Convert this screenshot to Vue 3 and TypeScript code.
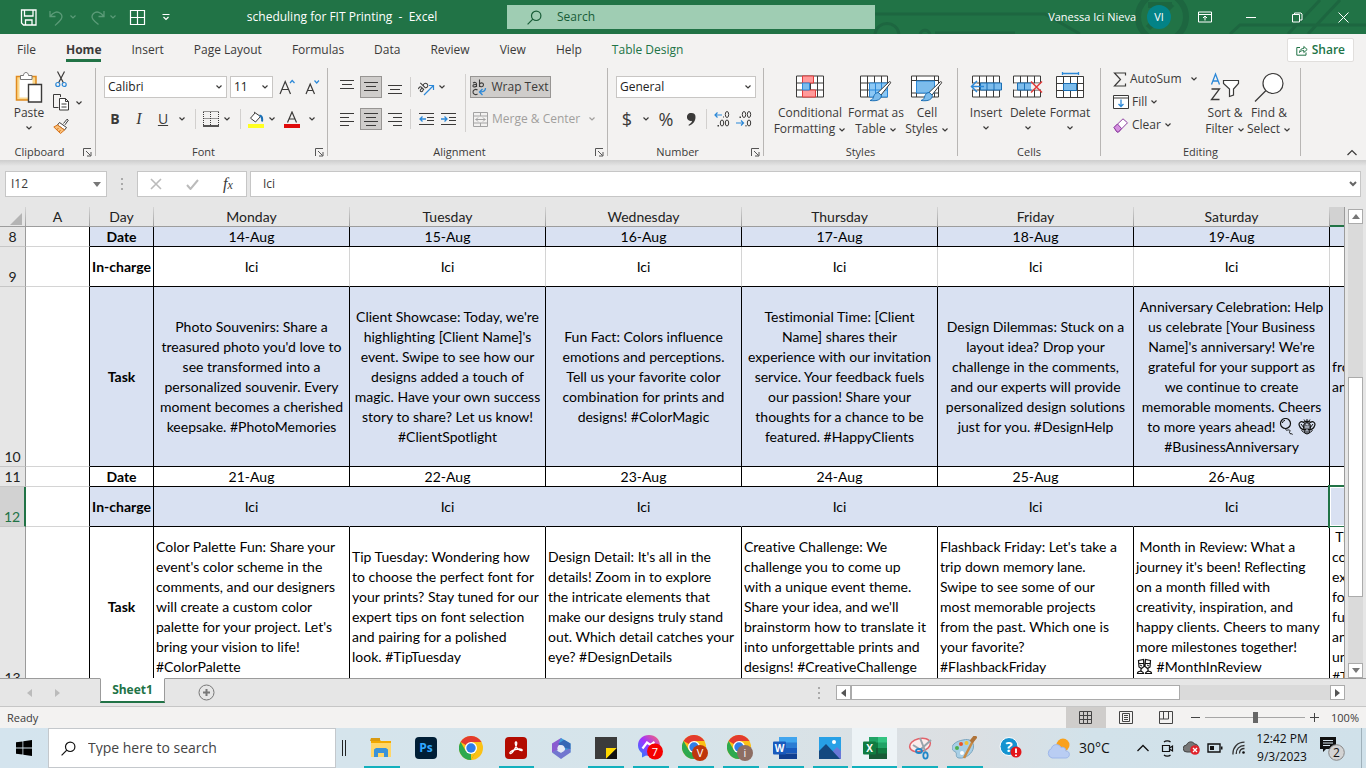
<script setup lang="ts">
import { h, ref } from 'vue'

interface IconDef {
  w: number
  h: number
  body: string
}

const sheetGrid = (w: number) =>
  `<path d="M.5 3.500h${w}v21h-${w}z" fill="#fff" stroke="#3b3a39"/><path d="M.5 10.500h${w}M.5 17.500h${w}M7.500 3.500v21M14.500 3.500v21M21.500 3.500v21" stroke="#3b3a39" fill="none"/>`

const brush =
  '<path d="M29 9.500c1-1 2 0 1.500 1L21 22.500l-3-2.500z" fill="#fff" stroke="#3b3a39"/><path d="M18.200 20l3 2.600c.5 4-3.500 6.500-11.200 5.400 3-.8 3-2.200 4-4.900.8-2 2.500-3 4.200-3.100z" fill="#7cbcec" stroke="#1a6fb5"/>'

const chromeBody =
  '<circle cx="12" cy="12" r="12" fill="#fbc116"/><path d="M12 12L1.600 6A12 12 0 0 1 22.400 6z" fill="#e33b2e"/><path d="M1.600 6A12 12 0 0 0 12 24l5.200-9-5.200 2-5.200-2z" fill="#2da94f"/><path d="M12 24l5.300-9L22.400 6H12z" fill="#fbc116"/><circle cx="12" cy="12" r="6" fill="#fff"/><circle cx="12" cy="12" r="4.700" fill="#2f7de9"/>'

const icons: Record<string, IconDef> = {
  save: { w: 17, h: 17, body: '<path d="M1.500 1h14.500v15H3.500l-2-2z M4.500 1v6h8.500V1M5.500 16v-5h6.500v5" fill="none" stroke="#fff" stroke-width="1.300"/>' },
  undo: { w: 16, h: 17, body: '<path d="M1 2v5.500h5.500M1.500 7C4 3.500 8 1.500 11.500 4.500c4 4-1 8-5.500 12" fill="none" stroke="#5b9b78" stroke-width="1.300"/>' },
  redo: { w: 16, h: 17, body: '<path d="M15 2v5.500H9.500M14.500 7C12 3.500 8 1.500 4.500 4.500c-4 4 1 8 5 11" fill="none" stroke="#5b9b78" stroke-width="1.300"/>' },
  qgrid: { w: 17, h: 17, body: '<path d="M1.500 1.500h14v14h-14zM8.500 1.500v14M1.500 8.500h14" fill="none" stroke="#fff" stroke-width="1.200"/>' },
  qmore: { w: 8, h: 8, body: '<path d="M.5 1.500h7M1.500 4l2.500 2.500L6.500 4" fill="none" stroke="#fff" stroke-width="1.200"/>' },
  chev: { w: 8, h: 6, body: '<path d="M1.500 1.500L4 4l2.500-2.500" fill="none" stroke="currentColor" stroke-width="1.200"/>' },
  lens: { w: 15, h: 15, body: '<circle cx="9.200" cy="5.800" r="4.700" fill="none" stroke="currentColor" stroke-width="1.200"/><path d="M5.800 9.200L.6 14.400" stroke="currentColor" stroke-width="1.200"/>' },
  ribbonOpt: { w: 14, h: 12, body: '<path d="M.5 1h13v10H.5zM.5 3.500h13M7 9.500V5.500M5 7l2-2 2 2" fill="none" stroke="#fff"/>' },
  min: { w: 11, h: 11, body: '<path d="M0 5.500h10" stroke="#fff"/>' },
  restore: { w: 11, h: 11, body: '<path d="M.5 2.500h7v7.500h-7zM2.500 2.500V1h6.500l1 1v6H8" fill="none" stroke="#fff"/>' },
  close: { w: 11, h: 11, body: '<path d="M.5.5l10 10M10.500.5l-10 10" stroke="#fff"/>' },
  share: { w: 12, h: 12, body: '<path d="M4 3.500H.8v7.700h9.200V8.500M3.500 8.500c.3-3 2-4 4.300-4V2.500l3.400 3-3.400 3v-2C6 6.500 4.500 7 3.500 8.500z" fill="none" stroke="#217346"/>' },
  paste: { w: 28, h: 31, body: '<path d="M1.500 4.500h19.500v23.500H1.500z" fill="#fbd98f" stroke="#e08a1e" stroke-width="1.500"/><path d="M4.500 7.500h13v18h-13z" fill="#fff"/><path d="M5.500 7.500v-4h3c0-4 5-4 5 0h3.500v4z" fill="#fff" stroke="#777"/><path d="M13.500 12.500h13v17.500h-13z" fill="#fff" stroke="#3b3a39" stroke-width="1.400"/>' },
  cut: { w: 12, h: 17, body: '<path d="M2.500.5L8.500 12M9.500.5L3.500 12" stroke="#3b3a39" stroke-width="1.200"/><circle cx="2.800" cy="13.500" r="2" fill="none" stroke="#2b88d8" stroke-width="1.200"/><circle cx="9.200" cy="13.500" r="2" fill="none" stroke="#2b88d8" stroke-width="1.200"/>' },
  copy: { w: 17, h: 17, body: '<path d="M5.500 13.500h-5v-13h7v2.500" fill="none" stroke="#3b3a39"/><path d="M6.500 4.500h6l3 3v8.500h-9z" fill="#fff" stroke="#3b3a39"/><path d="M12.500 4.500v3h3M8.500 10h5M8.500 13h5" fill="none" stroke="#3b3a39"/>' },
  painter: { w: 16, h: 16, body: '<path d="M10.500 5.500L14 1.200l1.300 1L12 6.800" fill="#fff" stroke="#3b3a39"/><path d="M6.500 4.500l7 5-2 2.500-7-5z" fill="#fff" stroke="#3b3a39"/><path d="M4.500 7l7 5-4 3.500L.8 9z" fill="#f9c07a" stroke="#d8731a"/><path d="M3.500 12l2-2M6 14l1.500-2" stroke="#d8731a"/>' },
  launch: { w: 9, h: 9, body: '<path d="M.5 8V.5H8M3 3l4.500 4.500M8 4v4H4" fill="none" stroke="#555"/>' },
  growFont: { w: 16, h: 16, body: '<path d="M1 15L6.200 2.500 11.500 15M2.800 10.500h6.800" fill="none" stroke="#3b3a39" stroke-width="1.200"/><path d="M11 4l2.200-2.500L15.500 4" fill="none" stroke="#2b88d8" stroke-width="1.200"/>' },
  shrinkFont: { w: 16, h: 16, body: '<path d="M2 15L6.200 5l4.300 10M3.500 11.500h5.500" fill="none" stroke="#3b3a39" stroke-width="1.200"/><path d="M10.500 1.500l2.200 2.500L15 1.500" fill="none" stroke="#2b88d8" stroke-width="1.200"/>' },
  borders: { w: 16, h: 16, body: '<path d="M.5.500h15M.5 7.500h15M.5 1v14M7.500 1v14M15.500 1v14" stroke="#3b3a39" stroke-dasharray="1 1" fill="none"/><path d="M0 15h16" stroke="#111" stroke-width="1.400"/>' },
  fill: { w: 16, h: 17, body: '<path d="M7 2L2.500 7.200 7.500 11l5-5.500L6 1" fill="#fff" stroke="#3b3a39"/><path d="M11.500 4.500c2.500.5 3 3 2.500 6" fill="none" stroke="#1a6fb5" stroke-width="2"/><path d="M0 13h16v4H0z" fill="#ffff21"/>' },
  fontColor: { w: 16, h: 17, body: '<path d="M3.500 11.500L8 1l4.500 10.500M5 8h6" fill="none" stroke="#3b3a39" stroke-width="1.200"/><path d="M0 13h16v4H0z" fill="#e00b0b"/>' },
  alTop: { w: 14, h: 16, body: '<path d="M0 3.500h14M2 7.500h10M0 11.500h14" stroke="#3b3a39" transform="translate(0,-2)"/>' },
  alMid: { w: 14, h: 16, body: '<path d="M0 3.500h14M2 7.500h10M0 11.500h14" stroke="#3b3a39"/>' },
  alBot: { w: 14, h: 16, body: '<path d="M0 3.500h14M2 7.500h10M0 11.500h14" stroke="#3b3a39" transform="translate(0,3)"/>' },
  alLeft: { w: 14, h: 16, body: '<path d="M0 2.500h14M0 6.500h9M0 10.500h14M0 14.500h9" stroke="#3b3a39"/>' },
  alCenter: { w: 14, h: 16, body: '<path d="M0 2.500h14M2 6.500h10M0 10.500h14M2 14.500h10" stroke="#3b3a39"/>' },
  alRight: { w: 14, h: 16, body: '<path d="M0 2.500h14M5 6.500h9M0 10.500h14M5 14.500h9" stroke="#3b3a39"/>' },
  orient: { w: 17, h: 17, body: '<g transform="rotate(-45 5 9)" fill="none" stroke="#3b3a39"><path d="M1 6.500c2-1.200 3.500-.5 3.500 1V11M4.500 8.500C2 8 .5 8.800 1 10c.6 1.400 3 1 3.500-.5M6.700 3.500V11M6.700 8c1-2 4-1.500 4 1s-3 3-4 1"/></g><path d="M6 16L15.500 6.500M11 6.500h4.500V11" fill="none" stroke="#2b88d8" stroke-width="1.200"/>' },
  outdent: { w: 15, h: 14, body: '<path d="M0 1.500h15M8 5.500h7M8 8.500h7M0 12.500h15" stroke="#3b3a39"/><path d="M7 7H1M3.500 4.500L1 7l2.500 2.500" fill="none" stroke="#2b88d8" stroke-width="1.300"/>' },
  indent: { w: 15, h: 14, body: '<path d="M0 1.500h15M8 5.500h7M8 8.500h7M0 12.500h15" stroke="#3b3a39"/><path d="M0 7h6M3.500 4.500L6 7 3.500 9.500" fill="none" stroke="#2b88d8" stroke-width="1.300"/>' },
  wrap: { w: 15, h: 17, body: '<g fill="none" stroke="#3b3a39" stroke-width="1.100"><path d="M1 4c1.500-1 3.500-.8 3.500 1v3M4.500 5.500C2 5.300.7 6 1 7.200c.5 1.200 3 .8 3.500-.5M7.500.5V8M7.500 5.500c.5-2.200 4-2.200 4 .2s-3.500 2.800-4 .6M5.500 11c-2-1.300-4.500-.3-4.500 2s2.500 3.300 4.500 2"/></g><path d="M13.500 9c0 3-1.500 4-5.500 4M10.500 10L7.500 13l3 3" fill="none" stroke="#2b88d8" stroke-width="1.300"/>' },
  merge: { w: 15, h: 15, body: '<path d="M.5.5h14v14H.5zM.5 4h14M.5 11h14M7.500.5V4M7.500 11v3.500M2.500 7.500h10M5 5.500l-2 2 2 2M10 5.500l2 2-2 2" fill="none" stroke="#a3a3a3"/>' },
  comma: { w: 9, h: 13, body: '<path d="M4.500 0a4 4 0 0 1 4 4c0 4-2 7-6.500 8.800l-.6-.8C4 10.500 5 9 5 7.800A4 4 0 1 1 4.500 0z" fill="#3b3a39"/>' },
  decInc: { w: 16, h: 16, body: '<g fill="none" stroke="#3b3a39"><ellipse cx="13" cy="3.500" rx="1.700" ry="3"/><ellipse cx="8" cy="12" rx="1.700" ry="3"/><ellipse cx="13" cy="12" rx="1.700" ry="3"/></g><path d="M3.500 14h1.500v1.500H3.500zM9 5.500h1v1H9z" fill="#3b3a39"/><path d="M8 4H1M3.500 1.500L1 4l2.500 2.500" fill="none" stroke="#2b88d8" stroke-width="1.200"/>' },
  decDec: { w: 16, h: 16, body: '<g fill="none" stroke="#3b3a39"><ellipse cx="8" cy="3.500" rx="1.700" ry="3"/><ellipse cx="13" cy="3.500" rx="1.700" ry="3"/><ellipse cx="13" cy="12" rx="1.700" ry="3"/></g><path d="M3.500 5.500h1.500v1.500H3.500zM9.500 14h1v1.500h-1z" fill="#3b3a39"/><path d="M0 12h7M5 9.500L7.500 12 5 14.500" fill="none" stroke="#2b88d8" stroke-width="1.200"/>' },
  cond: { w: 29, h: 30, body: sheetGrid(27) + '<path d="M6.500 3.500h11v7h-11zM6.500 17.500h13v7h-13z" fill="#ff9a9a" stroke="#e23b3b"/><path d="M6.500 10.500h7v7h-7z" fill="#7cbcec" stroke="#2b88d8"/>' },
  fmtTable: { w: 32, h: 30, body: sheetGrid(27) + '<path d="M9.500 10.500h18v14h-18z" fill="#8cc8f5" stroke="#2b88d8"/><path d="M9.500 17.500h18M15.500 10.500v14M21.500 10.500v14" stroke="#2b88d8"/>' + brush },
  cellStyles: { w: 32, h: 30, body: '<path d="M.5 3.500h27v21H.5z" fill="#fff" stroke="#3b3a39"/><path d="M.5 8h27M.5 20.500h27M5.500 3.500v21M23.500 3.500v21" stroke="#3b3a39"/><path d="M5.500 8.500h18v12h-18z" fill="#7cbcec" stroke="#2b88d8"/>' + brush },
  insert: { w: 32, h: 30, body: '<g transform="translate(2,0)">' + sheetGrid(27) + '<path d="M8.500 10.500h21v7h-21z" fill="#7cbcec" stroke="#1a6fb5"/><path d="M15 10.500v7M22 10.500v7" stroke="#1a6fb5"/><path d="M-1 11h6v6h-6z" fill="#f3f2f1"/></g><path d="M14 14H1.500M7 8.500L1.500 14 7 19.500" fill="none" stroke="#2b88d8" stroke-width="1.500"/>' },
  delete: { w: 32, h: 30, body: '<g transform="translate(1,0)">' + sheetGrid(27) + '<path d="M-1 11h5v6h-5z" fill="#f3f2f1"/><path d="M4.500 10.500h14v7h-14z" fill="#7cbcec" stroke="#1a6fb5"/><path d="M11.500 10.500v7" stroke="#1a6fb5"/><path d="M18 11h12v6H18z" fill="#f3f2f1"/></g><path d="M19 9l11 11M30 9L19 20" stroke="#e23b3b" stroke-width="1.500"/>' },
  format: { w: 29, h: 31, body: '<path d="M6.500 1.500h16M6.500 0v3M22.500 0v3" stroke="#2b88d8" stroke-width="1.300"/><g transform="translate(0,1)">' + sheetGrid(27) + '<path d="M7.500 10.500h13v7h-13z" fill="#7cbcec" stroke="#1a6fb5"/></g>' },
  sigma: { w: 14, h: 15, body: '<path d="M12.500 3.500V1H1.500l6 6.500-6 6.500h11v-2.500" fill="none" stroke="#3b3a39" stroke-width="1.200"/>' },
  fillDown: { w: 16, h: 14, body: '<path d="M.5.5h15v13H.5zM.5 3h15" fill="#fff" stroke="#3b3a39"/><path d="M8 4.500v7M5.500 9L8 11.500 10.500 9" fill="none" stroke="#2b88d8" stroke-width="1.300"/>' },
  eraser: { w: 16, h: 15, body: '<path d="M1 9.500L10 .8l4.500 4L5.500 14H4z" fill="#fff" stroke="#8d3fa0"/><path d="M1 9.500L4.500 6l4 4.500L5.500 14H4z" fill="#d58fe0" stroke="#8d3fa0"/>' },
  sort: { w: 30, h: 30, body: '<path d="M1.500 12L5.500 1.500 9.500 12M3 8.500h5" fill="none" stroke="#2b88d8" stroke-width="1.300"/><path d="M1.500 16.500h8L1.500 27h8" fill="none" stroke="#3b3a39" stroke-width="1.300"/><path d="M13.500 8h15v3l-5 5.500v6l-4 1.500v-7.500l-6-5.500z" fill="#fff" stroke="#3b3a39" stroke-width="1.200"/>' },
  find: { w: 30, h: 30, body: '<circle cx="19" cy="11" r="10" fill="#fff" stroke="#3b3a39" stroke-width="1.200"/><path d="M12 18L1 29" stroke="#3b3a39" stroke-width="1.300"/>' },
  collapse: { w: 10, h: 7, body: '<path d="M.5 6L5 1.500 9.500 6" fill="none" stroke="#3b3a39" stroke-width="1.200"/>' },
  caretDown: { w: 8, h: 5, body: '<path d="M0 0h8L4 5z" fill="#777"/>' },
  caretUp: { w: 8, h: 5, body: '<path d="M0 5h8L4 0z" fill="#777"/>' },
  caretLeft: { w: 5, h: 8, body: '<path d="M5 0v8L0 4z" fill="currentColor"/>' },
  caretRight: { w: 5, h: 8, body: '<path d="M0 0v8l5-4z" fill="currentColor"/>' },
  dots: { w: 3, h: 12, body: '<path d="M0 0h2v2H0zM0 5h2v2H0zM0 10h2v2H0z" fill="#aaa"/>' },
  cancel: { w: 12, h: 12, body: '<path d="M1 1l10 10M11 1L1 11" stroke="#bbb" stroke-width="1.600"/>' },
  accept: { w: 13, h: 11, body: '<path d="M1 6l3.500 4L12 1" fill="none" stroke="#bbb" stroke-width="2"/>' },
  expand: { w: 8, h: 6, body: '<path d="M1 1l3 3 3-3" fill="none" stroke="#666" stroke-width="2"/>' },
  corner: { w: 12, h: 12, body: '<path d="M12 0v12H0z" fill="#b4b4b4"/>' },
  add: { w: 17, h: 17, body: '<circle cx="8.500" cy="8.500" r="7.500" fill="none" stroke="#777"/><path d="M8.500 5v7M5 8.500h7" stroke="#777" stroke-width="2"/>' },
  balloon: { w: 15, h: 17, body: '<circle cx="6.500" cy="5.500" r="5" fill="none" stroke="#111" stroke-width="1.200"/><path d="M7 10.500c-1 3 2 1 3.500 1.500s-1 2.500.5 3.500 2-.5 2.500 1M3.500 5c0-1.500 1-2.500 2.500-2.500" fill="none" stroke="#111"/>' },
  confetti: { w: 18, h: 17, body: '<path d="M1.500 8C0 5 3 2.500 5.500 4.500 7 3 11 3 12.500 4.500 15 2.500 18 5 16.500 8c-1 3-3.500 3.500-5 3.500h-5C5 11.500 2.500 11 1.500 8z" fill="none" stroke="#111" stroke-width="1.200"/><path d="M9 1v3M6 1.500l1.500 2M12 1.500l-1.500 2" stroke="#111"/><path d="M6 6l3-2 3 2 .5 3-1 6L9 16l-2.500-1-1-6z" fill="#111" fill-opacity=".55" stroke="#111"/><path d="M3 6l3 4M15 6l-3 4M3.500 12l2 2.500M14.500 12l-2 2.500" stroke="#111"/><path d="M8 6l2 1M7 9h4M8 12h2" stroke="#d9e1f2"/>' },
  clink: { w: 17, h: 17, body: '<path d="M2.500 2.500l5-1 .5 7-2.500 2L3 9zM14.500 2.500l-5-1-.5 7 2.500 2L14 9zM2.500 5.500h5M9.500 5.500h5M5 10.500v3M12 10.500v3M1.500 15.500c0-3 5.500-3 6 0zM9.500 15.500c.5-3 6-3 6 0z" fill="none" stroke="#111" stroke-width="1.200"/><path d="M4 7l2 1M11 7l2 1" stroke="#111"/>' },
  viewNormal: { w: 14, h: 14, body: '<path d="M.5.5h12v12H.5zM4.500.5v12M8.500.5v12M.5 4.500h12M.5 8.500h12" fill="none" stroke="#444"/>' },
  viewLayout: { w: 14, h: 13, body: '<path d="M.5.5h13v12H.5zM3.500 2.500h7v8h-7zM5 4.500h4M5 6.500h4M5 8.500h4" fill="none" stroke="#444"/>' },
  viewBreak: { w: 14, h: 13, body: '<path d="M.5.5h13v12H.5zM4.500.5v7.500M9.500.5V8M.5 8h9" fill="none" stroke="#444"/>' },
  windows: { w: 16, h: 16, body: '<path d="M0 2.300l6.500-.9v6.200H0zM7.300 1.200L16 0v7.600H7.300zM0 8.400h6.500v6.200L0 13.700zM7.300 8.400H16V16l-8.700-1.200z" fill="#000"/>' },
  explorer: { w: 22, h: 20, body: '<path d="M1 1h8l2 2h10v16H1z" fill="#f2a900"/><path d="M1 5h20v14H1z" fill="#ffd667"/><path d="M0 3h10V0H1z" fill="#d99a11"/><path d="M4 19v-7.500L6 10h10l2 1.500V19h-4v-4H8v4z" fill="#3a92d8"/>' },
  ps: { w: 22, h: 22, body: '<rect width="22" height="22" rx="4" fill="#001e36"/><text x="11" y="15" text-anchor="middle" font-family="Open Sans, sans-serif" font-weight="700" font-size="12" fill="#31a8ff">Ps</text>' },
  chrome: { w: 24, h: 24, body: chromeBody },
  acrobat: { w: 22, h: 22, body: '<rect width="22" height="22" rx="4" fill="#b30b00"/><path d="M11 5c-1.500 0-.5 3.500.7 5.500 1.500 2.500 5 4 5.500 2.700.5-1.700-5-1.400-8-.4-2.500.9-5 2.500-4.300 3.500 1 1.200 4-2.500 5.200-5C11.500 8.500 12.500 5 11 5z" fill="none" stroke="#fff" stroke-width="1.300"/>' },
  m365: { w: 20, h: 21, body: '<path d="M10 0L1 5.500v9L7 12V8l6-4z" fill="#8a5bd0"/><path d="M10 0l9.500 5.500v9L14 12V8L8 4.500z" fill="#3d9bd9"/><path d="M1 14.500L10 21l9.500-6.500v-4L14 12l-4 3-5-3z" fill="#7276cf"/><path d="M13 1.700L7 6l7 4 5.500 1V5.500z" fill="#3567b5"/><circle cx="10" cy="10.500" r="3.600" fill="#e4eaf5"/>' },
  notes: { w: 22, h: 22, body: '<path d="M0 0h22v22H0z" fill="#3b3b3b"/><path d="M11 11h11L11 22z" fill="#ffd800"/><path d="M11 22h11V11z" fill="#111"/>' },
  messenger: { w: 26, h: 26, body: '<defs><linearGradient id="msg" x1="0" y1="1" x2="1" y2="0"><stop offset="0" stop-color="#1689ff"/><stop offset=".5" stop-color="#a033ff"/><stop offset="1" stop-color="#ff6968"/></linearGradient></defs><path d="M11 0c6.500 0 11 4.500 11 10.500S17.500 21 11 21l-3-.5L4 22.500V18C1.500 16 0 13.500 0 10.500 0 4.500 4.500 0 11 0z" fill="url(#msg)"/><path d="M4.500 13.500L9 7.500l3.500 2.500 4-3" fill="none" stroke="#fff" stroke-width="2.200"/><circle cx="17" cy="16.500" r="8" fill="#f50000"/><text x="17" y="20.500" text-anchor="middle" font-family="Open Sans, sans-serif" font-size="11" fill="#fff">7</text>' },
  chromeV: { w: 27, h: 26, body: chromeBody + '<circle cx="18" cy="18" r="8" fill="#bf360c"/><text x="18" y="22" text-anchor="middle" font-family="Open Sans, sans-serif" font-size="11" fill="#fff">V</text>' },
  chromeI: { w: 27, h: 26, body: chromeBody + '<circle cx="18" cy="18" r="8" fill="#8d6e63"/><text x="18" y="22" text-anchor="middle" font-family="Open Sans, sans-serif" font-size="11" fill="#fff">i</text>' },
  word: { w: 24, h: 22, body: '<path d="M6 0h18v6H6z" fill="#41a5ee"/><path d="M6 5.500h18V11H6z" fill="#2b7cd3"/><path d="M6 11h18v5.500H6z" fill="#185abd"/><path d="M6 16.500h18V22H6z" fill="#103f91"/><rect y="4.500" width="13" height="13" rx="1" fill="#185abd"/><text x="6.500" y="15" text-anchor="middle" font-family="Open Sans, sans-serif" font-weight="700" font-size="10" fill="#fff">W</text>' },
  photos: { w: 22, h: 22, body: '<path d="M0 0h22v22H0z" fill="#27a0e6"/><path d="M12 16l6-6 4 4v8H10z" fill="#6a78d8"/><path d="M0 14l7-7 14 15H0z" fill="#14487f"/><circle cx="15" cy="5" r="2" fill="#fff"/>' },
  excel: { w: 24, h: 22, body: '<path d="M6 0h9v6H6z" fill="#21a366"/><path d="M15 0h9v6h-9z" fill="#33c481"/><path d="M6 5.500h9V11H6z" fill="#107c41"/><path d="M15 5.500h9V11h-9z" fill="#21a366"/><path d="M6 11h18v11H6z" fill="#185c37"/><path d="M15 11h9v5.500h-9z" fill="#107c41"/><rect y="4.500" width="13" height="13" rx="1" fill="#107c41"/><text x="6.500" y="15" text-anchor="middle" font-family="Open Sans, sans-serif" font-weight="700" font-size="10" fill="#fff">X</text>' },
  snip: { w: 24, h: 23, body: '<ellipse cx="12" cy="8" rx="10.500" ry="6.500" transform="rotate(-14 12 8)" fill="#fbecec" stroke="#e2626a" stroke-width="1.500"/><path d="M12 1l6 15M23 3L12 13" stroke="#98a4ad" stroke-width="2"/><path d="M5 8l8 5" stroke="#98a4ad" stroke-width="2"/><ellipse cx="11" cy="14" rx="3" ry="2" fill="none" stroke="#1f86c9" stroke-width="1.800"/><ellipse cx="17.500" cy="18.500" rx="2.200" ry="3.200" fill="none" stroke="#1f86c9" stroke-width="1.800"/>' },
  paint: { w: 25, h: 24, body: '<path d="M11 4c7-2 11 2 10.500 7C21 17 14 23 7 22c-4-.5-2-4-3-5.500S0 15 0 12c0-4 5-7 11-8z" fill="#a8cfe6" stroke="#7ba6bf"/><circle cx="5" cy="12" r="2" fill="#4caf50"/><circle cx="9" cy="8" r="2" fill="#e8552d"/><circle cx="14.500" cy="7" r="2" fill="#f1c232"/><circle cx="10" cy="17" r="2" fill="#fff"/><path d="M23 1L12 22" stroke="#c98a43" stroke-width="2.500"/><path d="M24 0l-5 6" stroke="#b0743a" stroke-width="4"/>' },
  help: { w: 23, h: 22, body: '<circle cx="10" cy="9.500" r="9" fill="#1593d0" stroke="#fff"/><text x="10" y="15" text-anchor="middle" font-family="Open Sans, sans-serif" font-weight="700" font-size="15" fill="#fff">?</text><circle cx="17" cy="15" r="5.500" fill="#e3151a"/><path d="M17 11.500v4.500M17 17.500v1.500" stroke="#fff" stroke-width="1.800"/>' },
  weather: { w: 25, h: 21, body: '<circle cx="16" cy="7" r="6.500" fill="#f9a11b"/><path d="M5 20a5 5 0 0 1-.5-9.500C5 6 12 5 14 9.500c3-1 5 1 4.800 3.500 5 0 4.500 7 0 7z" fill="#b9cdf3" stroke="#9db7ea"/>' },
  trayUp: { w: 12, h: 8, body: '<path d="M.5 7L6 1.500 11.500 7" fill="none" stroke="#111" stroke-width="1.300"/>' },
  meet: { w: 13, h: 17, body: '<path d="M1.500 5.500h7v6h-7zM8.500 8l3-2v5l-3-2M3 2c1.500-1.500 5-1.500 6.500 0M3 15c1.500 1.500 5 1.500 6.500 0" fill="none" stroke="#111" stroke-width="1.200"/>' },
  cloud: { w: 17, h: 14, body: '<path d="M4 11a3.500 3.500 0 0 1-.5-7C5 0 10 0 11.500 3c3 0 4 2 3.500 4.500L13 11z" fill="#777" stroke="#444"/><circle cx="12" cy="9" r="4.800" fill="#e0232b"/><path d="M10 7l4 4M14 7l-4 4" stroke="#fff" stroke-width="1.300"/>' },
  battery: { w: 16, h: 10, body: '<path d="M1 1h12v8H1z" fill="none" stroke="#111" stroke-width="1.400"/><path d="M3 3h4v4H3zM14 3.500h1.500v3H14z" fill="#111"/>' },
  wifi: { w: 14, h: 14, body: '<circle cx="11.500" cy="11.500" r="1.300" fill="#111"/><path d="M7.500 12.500c0-3 2-5 5-5M4.300 13C4 8 7.500 4.500 12.500 4.500M1 13.500C.5 6.500 5.500 1.200 12.500 1.200" fill="none" stroke="#333" stroke-width="1.300"/>' },
  notif: { w: 25, h: 25, body: '<path d="M0 1h16v12H6l-3 3v-3H0z" fill="#111"/><path d="M3 4.500h10M3 7h10M3 9.500h7" stroke="#d5e3ec"/><circle cx="16.500" cy="16.500" r="7.800" fill="#d3d3d3" stroke="#888"/><text x="16.500" y="21" text-anchor="middle" font-family="Open Sans, sans-serif" font-size="12" fill="#111">2</text>' },
}

const Ico = (props: { n: string }) => {
  const icon = icons[props.n]
  return h('svg', {
    width: icon.w,
    height: icon.h,
    viewBox: `0 0 ${icon.w} ${icon.h}`,
    'aria-hidden': 'true',
    innerHTML: icon.body,
  })
}

const tabs = ['File', 'Home', 'Insert', 'Page Layout', 'Formulas', 'Data', 'Review', 'View', 'Help', 'Table Design']
const activeTab = ref('Home')
const search = ref('')
const taskSearch = ref('')
const cellName = ref('I12')
const formula = ref('Ici')
const zoomLevel = ref(50)

interface Row {
  no: number
  label: string
  kind: string
  cells: string[]
}

const columns = ['Monday', 'Tuesday', 'Wednesday', 'Thursday', 'Friday', 'Saturday']
const incharge = ['Ici', 'Ici', 'Ici', 'Ici', 'Ici', 'Ici', '']

const rows: Row[] = [
  { no: 8, label: 'Date', kind: 'date shade', cells: ['14-Aug', '15-Aug', '16-Aug', '17-Aug', '18-Aug', '19-Aug', ''] },
  { no: 9, label: 'In-charge', kind: 'charge', cells: incharge },
  {
    no: 10,
    label: 'Task',
    kind: 'task shade',
    cells: [
      "Photo Souvenirs: Share a\ntreasured photo you'd love to\nsee transformed into a\npersonalized souvenir. Every\nmoment becomes a cherished\nkeepsake. #PhotoMemories",
      "Client Showcase: Today, we're\nhighlighting [Client Name]'s\nevent. Swipe to see how our\ndesigns added a touch of\nmagic. Have your own success\nstory to share? Let us know!\n#ClientSpotlight",
      'Fun Fact: Colors influence\nemotions and perceptions.\nTell us your favorite color\ncombination for prints and\ndesigns! #ColorMagic',
      'Testimonial Time: [Client\nName] shares their\nexperience with our invitation\nservice. Your feedback fuels\nour passion! Share your\nthoughts for a chance to be\nfeatured. #HappyClients',
      'Design Dilemmas: Stuck on a\nlayout idea? Drop your\nchallenge in the comments,\nand our experts will provide\npersonalized design solutions\njust for you. #DesignHelp',
      "Anniversary Celebration: Help\nus celebrate [Your Business\nName]'s anniversary! We're\ngrateful for your support as\nwe continue to create\nmemorable moments. Cheers\nto more years ahead! {balloon} {confetti}\n#BusinessAnniversary",
      'from\nand',
    ],
  },
  { no: 11, label: 'Date', kind: 'date', cells: ['21-Aug', '22-Aug', '23-Aug', '24-Aug', '25-Aug', '26-Aug', ''] },
  { no: 12, label: 'In-charge', kind: 'charge shade current', cells: incharge },
  {
    no: 13,
    label: 'Task',
    kind: 'last',
    cells: [
      "Color Palette Fun: Share your\nevent's color scheme in the\ncomments, and our designers\nwill create a custom color\npalette for your project. Let's\nbring your vision to life!\n#ColorPalette",
      'Tip Tuesday: Wondering how\nto choose the perfect font for\nyour prints? Stay tuned for our\nexpert tips on font selection\nand pairing for a polished\nlook. #TipTuesday',
      "Design Detail: It's all in the\ndetails! Zoom in to explore\nthe intricate elements that\nmake our designs truly stand\nout. Which detail catches your\neye? #DesignDetails",
      "Creative Challenge: We\nchallenge you to come up\nwith a unique event theme.\nShare your idea, and we'll\nbrainstorm how to translate it\ninto unforgettable prints and\ndesigns! #CreativeChallenge",
      "Flashback Friday: Let's take a\ntrip down memory lane.\nSwipe to see some of our\nmost memorable projects\nfrom the past. Which one is\nyour favorite?\n#FlashbackFriday",
      " Month in Review: What a\njourney it's been! Reflecting\non a month filled with\ncreativity, inspiration, and\nhappy clients. Cheers to many\nmore milestones together!\n{clink} #MonthInReview",
      ' Th\ncom\nexp\nfor\nfun\nand\nun\n#Th',
    ],
  },
]

const parts = (text: string) =>
  text
    .split(/(\{\w+\})/)
    .filter((p) => p !== '')
    .map((p) => (p.startsWith('{') ? { icon: p.slice(1, -1), text: '' } : { icon: '', text: p }))

const tasks = [
  { icon: 'explorer', name: 'File Explorer', open: true },
  { icon: 'ps', name: 'Photoshop', open: false },
  { icon: 'chrome', name: 'Chrome', open: false },
  { icon: 'acrobat', name: 'Acrobat', open: true },
  { icon: 'm365', name: 'Microsoft 365', open: false },
  { icon: 'notes', name: 'Sticky Notes', open: true },
  { icon: 'messenger', name: 'Messenger', open: true },
  { icon: 'chromeV', name: 'Chrome, profile V', open: true },
  { icon: 'chromeI', name: 'Chrome, profile i', open: true },
  { icon: 'word', name: 'Word', open: true },
  { icon: 'photos', name: 'Photos', open: true },
  { icon: 'excel', name: 'Excel', open: true },
  { icon: 'snip', name: 'Snipping Tool', open: true },
  { icon: 'paint', name: 'Paint', open: true },
]
</script>

<template>
  <div class="screen">
    <header class="title-bar">
      <svg class="circuit" width="496" height="34" viewBox="0 0 496 34" aria-hidden="true">
        <g fill="none" stroke="#1d6640" stroke-width="3">
          <path d="M0 14h175l35 20M5 34c2-14 22-14 24 0M50 34c2-5 8-5 10 0M65 33h80" />
          <circle cx="292" cy="17" r="24" stroke-width="6" />
          <path d="M278 5h24M278 28l24-24" stroke-width="6" />
          <path d="M360 34l10-9h126M418 34l32-34M438 34l32-34" />
        </g>
      </svg>
      <div class="title-left">
        <div class="qat">
          <button aria-label="Save"><Ico n="save" /></button>
          <button class="dim" aria-label="Undo"><Ico n="undo" /><Ico n="chev" /></button>
          <button class="dim" aria-label="Redo"><Ico n="redo" /><Ico n="chev" /></button>
          <button aria-label="Borders"><Ico n="qgrid" /></button>
          <button class="qmore" aria-label="Customize toolbar"><Ico n="qmore" /></button>
        </div>
        <div class="doc-title">scheduling for FIT Printing&nbsp; -&nbsp; Excel</div>
      </div>
      <label class="title-search">
        <Ico n="lens" />
        <input v-model="search" type="text" placeholder="Search" aria-label="Search" />
      </label>
      <div class="title-right">
        <span class="user">Vanessa Ici Nieva</span>
        <span class="avatar">VI</span>
        <button aria-label="Ribbon display options"><Ico n="ribbonOpt" /></button>
        <button aria-label="Minimize"><Ico n="min" /></button>
        <button aria-label="Restore"><Ico n="restore" /></button>
        <button aria-label="Close"><Ico n="close" /></button>
      </div>
    </header>

    <nav class="tabs">
      <button
        v-for="t in tabs"
        :key="t"
        :class="{ active: t === activeTab, context: t === 'Table Design' }"
        @click="activeTab = t"
      >
        {{ t }}
      </button>
      <button class="share"><Ico n="share" />Share</button>
    </nav>

    <section class="ribbon">
      <div class="group g-clip">
        <div class="body">
          <button class="big"><Ico n="paste" /><span>Paste</span><Ico n="chev" /></button>
          <div class="clip-col">
            <button aria-label="Cut"><Ico n="cut" /></button>
            <button aria-label="Copy"><Ico n="copy" /><Ico n="chev" /></button>
            <button aria-label="Format Painter"><Ico n="painter" /></button>
          </div>
        </div>
        <div class="caption"><span>Clipboard</span><button aria-label="Clipboard settings"><Ico n="launch" /></button></div>
      </div>

      <div class="group g-font">
        <div class="body col">
          <div class="line">
            <span class="drop w-font"><select aria-label="Font"><option>Calibri</option></select><Ico n="chev" /></span>
            <span class="drop w-size"><select aria-label="Font size"><option>11</option></select><Ico n="chev" /></span>
            <button class="t24" aria-label="Increase font size"><Ico n="growFont" /></button>
            <button class="t26" aria-label="Decrease font size"><Ico n="shrinkFont" /></button>
          </div>
          <div class="line">
            <button class="t24 glyph"><b>B</b></button>
            <button class="t24 glyph"><i>I</i></button>
            <button class="t24 glyph"><u>U</u></button>
            <button class="arrow" aria-label="Underline style"><Ico n="chev" /></button>
            <span class="sep"></span>
            <button class="t18" aria-label="Borders"><Ico n="borders" /></button>
            <button class="arrow" aria-label="Border style"><Ico n="chev" /></button>
            <span class="sep"></span>
            <button class="t18" aria-label="Fill color"><Ico n="fill" /></button>
            <button class="arrow" aria-label="Fill color list"><Ico n="chev" /></button>
            <button class="t26" aria-label="Font color"><Ico n="fontColor" /></button>
            <button class="arrow" aria-label="Font color list"><Ico n="chev" /></button>
          </div>
        </div>
        <div class="caption"><span>Font</span><button aria-label="Font settings"><Ico n="launch" /></button></div>
      </div>

      <div class="group g-align">
        <div class="body">
          <div class="col">
            <div class="line">
              <button class="t22" aria-label="Top align"><Ico n="alTop" /></button>
              <button class="t22 on" aria-label="Middle align"><Ico n="alMid" /></button>
              <button class="t22" aria-label="Bottom align"><Ico n="alBot" /></button>
              <span class="sep"></span>
              <button class="t18" aria-label="Orientation"><Ico n="orient" /></button>
              <button class="arrow" aria-label="Orientation list"><Ico n="chev" /></button>
            </div>
            <div class="line">
              <button class="t22" aria-label="Align left"><Ico n="alLeft" /></button>
              <button class="t22 on" aria-label="Center"><Ico n="alCenter" /></button>
              <button class="t22" aria-label="Align right"><Ico n="alRight" /></button>
              <span class="sep"></span>
              <button class="t18" aria-label="Decrease indent"><Ico n="outdent" /></button>
              <button class="t26" aria-label="Increase indent"><Ico n="indent" /></button>
            </div>
          </div>
          <span class="tall-sep"></span>
          <div class="col">
            <div class="line"><button class="wrap-btn on"><Ico n="wrap" />Wrap Text</button></div>
            <div class="line"><button class="merge-btn" disabled><Ico n="merge" />Merge &amp; Center<Ico class="far" n="chev" /></button></div>
          </div>
        </div>
        <div class="caption"><span>Alignment</span><button aria-label="Alignment settings"><Ico n="launch" /></button></div>
      </div>

      <div class="group g-number">
        <div class="body col">
          <div class="line">
            <span class="drop w-num"><select aria-label="Number format"><option>General</option></select><Ico n="chev" /></span>
          </div>
          <div class="line">
            <button class="t22 sym">$</button>
            <button class="arrow" aria-label="Currency list"><Ico n="chev" /></button>
            <button class="t26 sym">%</button>
            <button class="t24" aria-label="Comma style"><Ico n="comma" /></button>
            <span class="sep"></span>
            <button class="t18" aria-label="Increase decimal"><Ico n="decInc" /></button>
            <button class="t26" aria-label="Decrease decimal"><Ico n="decDec" /></button>
          </div>
        </div>
        <div class="caption"><span>Number</span><button aria-label="Number settings"><Ico n="launch" /></button></div>
      </div>

      <div class="group g-styles">
        <div class="body">
          <button class="big w78"><Ico n="cond" /><span>Conditional<br />Formatting <Ico n="chev" /></span></button>
          <button class="big w54"><Ico n="fmtTable" /><span>Format as<br />Table <Ico n="chev" /></span></button>
          <button class="big w48"><Ico n="cellStyles" /><span>Cell<br />Styles <Ico n="chev" /></span></button>
        </div>
        <div class="caption"><span>Styles</span></div>
      </div>

      <div class="group g-cells">
        <div class="body">
          <button class="big w42"><Ico n="insert" /><span>Insert</span><Ico n="chev" /></button>
          <button class="big w42"><Ico n="delete" /><span>Delete</span><Ico n="chev" /></button>
          <button class="big w42"><Ico n="format" /><span>Format</span><Ico n="chev" /></button>
        </div>
        <div class="caption"><span>Cells</span></div>
      </div>

      <div class="group g-edit">
        <div class="body">
          <div class="edit-col">
            <button><Ico n="sigma" />AutoSum<Ico class="far" n="chev" /></button>
            <button><Ico n="fillDown" />Fill<Ico n="chev" /></button>
            <button><Ico n="eraser" />Clear<Ico n="chev" /></button>
          </div>
          <button class="big w44"><Ico n="sort" /><span>Sort &amp;<br />Filter <Ico n="chev" /></span></button>
          <button class="big w44"><Ico n="find" /><span>Find &amp;<br />Select <Ico n="chev" /></span></button>
        </div>
        <div class="caption"><span>Editing</span></div>
      </div>
      <button class="collapse" aria-label="Collapse ribbon"><Ico n="collapse" /></button>
    </section>

    <section class="formula-bar">
      <label class="name-box"><input v-model="cellName" type="text" aria-label="Name box" /><Ico n="caretDown" /></label>
      <Ico class="grip" n="dots" />
      <div class="fx-box">
        <button aria-label="Cancel"><Ico n="cancel" /></button>
        <button aria-label="Enter"><Ico n="accept" /></button>
        <button class="fx" aria-label="Insert function"><i>f<small>x</small></i></button>
      </div>
      <label class="formula"><input v-model="formula" type="text" aria-label="Formula" /><Ico n="expand" /></label>
    </section>

    <main class="sheet">
      <div class="grid-wrap">
        <table>
          <colgroup>
            <col class="c-no" />
            <col class="c-a" />
            <col class="c-a" />
            <col v-for="c in columns" :key="c" class="c-day" />
            <col />
          </colgroup>
          <thead>
            <tr>
              <th class="corner"><Ico n="corner" /></th>
              <th>A</th>
              <th>Day</th>
              <th v-for="c in columns" :key="c">{{ c }}</th>
              <th class="sel-col"></th>
            </tr>
          </thead>
          <tbody>
            <tr v-for="r in rows" :key="r.no" :class="r.kind">
              <th class="row-no">{{ r.no }}</th>
              <td class="blank"></td>
              <td class="label">{{ r.label }}</td>
              <td v-for="(c, i) in r.cells" :key="i" :class="{ cut: i === 6 }">
                <div class="text">
                  <template v-for="(p, k) in parts(c)" :key="k"><Ico v-if="p.icon" :n="p.icon" /><template v-else>{{ p.text }}</template></template>
                </div>
                <span v-if="r.no === 12 && i === 6" class="selection"></span>
              </td>
            </tr>
          </tbody>
        </table>
      </div>
      <div class="vscroll">
        <button aria-label="Scroll up"><Ico n="caretUp" /></button>
        <div class="vtrack"><div class="vthumb"></div></div>
        <button aria-label="Scroll down"><Ico n="caretDown" /></button>
      </div>
    </main>

    <section class="sheet-tabs">
      <div class="nav-arrows">
        <button aria-label="Previous sheet"><Ico n="caretLeft" /></button>
        <button aria-label="Next sheet"><Ico n="caretRight" /></button>
      </div>
      <button class="sheet-tab">Sheet1</button>
      <button class="add" aria-label="New sheet"><Ico n="add" /></button>
      <Ico class="hgrip" n="dots" />
      <div class="hscroll">
        <button aria-label="Scroll left"><Ico n="caretLeft" /></button>
        <div class="htrack"><div class="hthumb"></div></div>
        <button aria-label="Scroll right"><Ico n="caretRight" /></button>
      </div>
    </section>

    <section class="status">
      <span class="ready">Ready</span>
      <button class="view on" aria-label="Normal view"><Ico n="viewNormal" /></button>
      <button class="view" aria-label="Page layout view"><Ico n="viewLayout" /></button>
      <button class="view" aria-label="Page break preview"><Ico n="viewBreak" /></button>
      <button class="zoom-btn" aria-label="Zoom out"><svg width="9" height="9" viewBox="0 0 9 9"><path d="M0 4.500h9" stroke="#444" /></svg></button>
      <input v-model="zoomLevel" class="zoom" type="range" min="0" max="100" aria-label="Zoom" />
      <button class="zoom-btn" aria-label="Zoom in"><svg width="9" height="9" viewBox="0 0 9 9"><path d="M0 4.500h9M4.500 0v9" stroke="#444" /></svg></button>
      <span class="percent">100%</span>
    </section>

    <footer class="taskbar">
      <button class="start" aria-label="Start"><Ico n="windows" /></button>
      <label class="task-search">
        <Ico n="lens" />
        <input v-model="taskSearch" type="text" placeholder="Type here to search" aria-label="Type here to search" />
      </label>
      <span class="bars"></span>
      <div class="apps">
        <button v-for="t in tasks" :key="t.icon" :class="{ open: t.open, focus: t.icon === 'excel' }" :aria-label="t.name">
          <Ico :n="t.icon" />
        </button>
      </div>
      <button class="help" aria-label="Get help"><Ico n="help" /></button>
      <button class="weather"><Ico n="weather" />30°C</button>
      <div class="tray">
        <button aria-label="Hidden icons"><Ico n="trayUp" /></button>
        <button aria-label="Meet now"><Ico n="meet" /></button>
        <button aria-label="OneDrive"><Ico n="cloud" /></button>
        <button aria-label="Battery"><Ico n="battery" /></button>
        <button aria-label="Network"><Ico n="wifi" /></button>
      </div>
      <div class="clock"><span>12:42 PM</span><span>9/3/2023</span></div>
      <button class="notif" aria-label="Notifications"><Ico n="notif" /></button>
      <span class="desk-edge"></span>
    </footer>
  </div>
</template>

<style>
body {
  margin: 0;
  background: #fff;
}
</style>

<style scoped>
.screen {
  display: flex;
  flex-direction: column;
  height: calc(100vh - 16px);
  overflow: hidden;
  font-family: 'Open Sans', 'Noto Sans', sans-serif;
  font-size: 12px;
  line-height: 16px;
  color: #3b3a39;
  background: #e6e6e6;
}
.screen * {
  box-sizing: border-box;
}
button {
  display: flex;
  align-items: center;
  justify-content: center;
  padding: 0;
  border: 0;
  background: none;
  font: inherit;
  color: inherit;
  white-space: nowrap;
}
input,
select {
  min-width: 0;
  border: 0;
  padding: 0;
  outline: 0;
  background: none;
  font: inherit;
  color: inherit;
  appearance: none;
}
svg {
  flex: none;
}

/* title bar */
.title-bar {
  position: relative;
  display: flex;
  align-items: center;
  height: 34px;
  flex: none;
  background: #217346;
  color: #fff;
}
.circuit {
  position: absolute;
  right: 0;
  top: 0;
}
.title-left {
  position: relative;
  display: flex;
  align-items: center;
  flex: 507 1 0;
}
.qat {
  display: flex;
  align-items: center;
  gap: 12px;
  padding-left: 20px;
}
.qat .dim {
  gap: 4px;
  width: 28px;
  color: #5b9b78;
}
.qat .qmore {
  margin-left: 4px;
}
.doc-title {
  flex: 1;
  padding-left: 7px;
  text-align: center;
}
.title-search {
  position: relative;
  display: flex;
  align-items: center;
  flex: 368 1 0;
  height: 24px;
  background: #9fcdb3;
  color: #185c37;
}
.title-search svg {
  margin: 0 15px 0 20px;
}
.title-search input {
  flex: 1;
}
.title-search input::placeholder {
  color: #185c37;
}
.title-right {
  position: relative;
  display: flex;
  align-items: center;
  justify-content: flex-end;
  flex: 491 1 0;
}
.user {
  font-size: 11px;
}
.avatar {
  width: 24px;
  margin: 0 11px;
  border-radius: 50%;
  background: #038387;
  text-align: center;
  line-height: 24px;
  font-size: 11px;
}
.title-right button {
  width: 46px;
  height: 34px;
}

/* tabs */
.tabs {
  display: flex;
  align-items: center;
  flex: none;
  height: 30px;
  padding: 2px 0 0 2px;
  background: #f3f2f1;
}
.tabs button {
  position: relative;
  padding: 0 15px;
  height: 28px;
}
.tabs .active {
  font-weight: 700;
}
.tabs .active::after {
  content: '';
  position: absolute;
  left: 15px;
  right: 15px;
  bottom: 2px;
  height: 3px;
  background: #217346;
}
.tabs .context {
  color: #217346;
}
.tabs .share {
  gap: 4px;
  height: 24px;
  margin: 0 12px 0 auto;
  padding: 0 8px;
  border: 1px solid #e1dfdd;
  border-radius: 2px;
  background: #fff;
  color: #217346;
  font-weight: 600;
}

/* ribbon */
.ribbon {
  display: flex;
  flex: none;
  height: 96px;
  background: #f3f2f1;
}
.group {
  position: relative;
  display: flex;
  flex-direction: column;
  flex: none;
  margin: 4px 0;
  border-right: 1px solid #b8b6b4;
}
.g-clip {
  width: 96px;
}
.g-font {
  width: 232px;
}
.g-align {
  width: 280px;
}
.g-number {
  width: 156px;
}
.g-styles {
  width: 194px;
}
.g-cells {
  width: 143px;
}
.g-edit {
  width: 200px;
}
.body {
  display: flex;
  flex: 1;
  padding-left: 7px;
}
.col {
  display: flex;
  flex-direction: column;
  gap: 8px;
  padding-top: 7px;
}
.line {
  display: flex;
  align-items: center;
  height: 24px;
}
.caption {
  display: flex;
  align-items: center;
  justify-content: center;
  height: 8px;
  font-size: 11px;
}
.caption span {
  flex: 1;
  text-align: center;
}
.caption button {
  width: 16px;
  height: 12px;
}
.t18 {
  width: 18px;
}
.t22 {
  width: 22px;
  height: 22px;
  margin: 0 1px;
}
.t24 {
  width: 24px;
}
.t26 {
  width: 26px;
}
.on {
  background: #cfcdcb;
  outline: 1px solid #979593;
  outline-offset: -1px;
}
.arrow {
  width: 14px;
  height: 22px;
}
.sep {
  width: 1px;
  height: 20px;
  margin: 0 6px;
  background: #d2d0ce;
}
.g-align .sep,
.g-number .sep {
  margin-left: 3px;
}
.glyph {
  font-size: 14px;
}
.glyph i {
  font-family: 'Liberation Serif', serif;
  font-size: 16px;
}
.sym {
  font-size: 18px;
}
.drop {
  display: flex;
  align-items: center;
  height: 22px;
  margin: 0 2px 0 1px;
  padding: 0 3px;
  border: 1px solid #c8c6c4;
  background: #fff;
}
.drop select {
  flex: 1;
  color: #222;
}
.w-font {
  width: 123px;
}
.w-size {
  width: 43px;
}
.w-num {
  width: 140px;
}
.g-align .tall-sep {
  width: 1px;
  height: 58px;
  margin: 6px 4px 0;
  background: #d2d0ce;
}
.wrap-btn {
  gap: 4px;
  width: 81px;
  height: 22px;
}
.merge-btn {
  gap: 4px;
  padding-left: 3px;
  color: #a19f9d;
}
.merge-btn .far {
  margin-left: 4px;
}
.big {
  flex-direction: column;
  justify-content: flex-start;
  padding-top: 4px;
}
.big > svg:first-child {
  height: 31px;
}
.big > span {
  padding-top: 2px;
  text-align: center;
}
.big > svg:last-child {
  margin-top: 4px;
}
.g-clip .big {
  width: 44px;
}
.g-clip .clip-col {
  display: flex;
  flex-direction: column;
  align-items: flex-start;
  gap: 6px;
  padding: 3px 0 0 2px;
}
.clip-col button {
  height: 17px;
  min-width: 16px;
  gap: 5px;
}
.w78 {
  width: 78px;
}
.w54 {
  width: 54px;
}
.w48 {
  width: 48px;
}
.w42 {
  width: 42px;
}
.w44 {
  width: 44px;
}
.edit-col {
  display: flex;
  flex-direction: column;
  align-items: flex-start;
  gap: 7px;
  width: 95px;
  padding: 3px 0 0 5px;
}
.edit-col button {
  height: 16px;
  gap: 3px;
}
.edit-col .far {
  margin-left: 5px;
}
.collapse {
  width: 20px;
  height: 16px;
  margin: auto 4px 0 auto;
  align-self: flex-end;
}

/* formula bar */
.formula-bar {
  display: flex;
  flex: none;
  height: 47px;
  padding: 11px 5px 10px;
  background: linear-gradient(#cdcdcd, #e6e6e6 6px);
}
.name-box,
.fx-box,
.formula {
  display: flex;
  align-items: center;
  border: 1px solid #c6c6c6;
  background: #fff;
}
.name-box {
  width: 102px;
  padding: 0 5px;
}
.name-box input {
  flex: 1;
}
.grip {
  margin: 7px 13px 7px 14px;
}
.fx-box {
  width: 110px;
  justify-content: space-around;
}
.fx-box button {
  width: 24px;
  height: 24px;
}
.fx {
  font-family: 'Liberation Serif', serif;
  font-size: 16px;
}
.fx small {
  font-size: 12px;
}
.formula {
  flex: 1;
  margin-left: 3px;
  padding: 0 3px 0 12px;
}
.formula input {
  flex: 1;
}

/* sheet */
.sheet {
  display: flex;
  flex: 1;
  min-height: 0;
}
.grid-wrap {
  flex: 1;
  overflow: hidden;
  border-right: 1px solid #9b9b9b;
}
table {
  width: 100%;
  table-layout: fixed;
  border-collapse: separate;
  border-spacing: 0;
  font-family: Lato, 'Open Sans', sans-serif;
  font-size: 14px;
  font-variant-ligatures: none;
  line-height: 20px;
  color: #000;
}
.c-no {
  width: 26px;
}
.c-a {
  width: 64px;
}
.c-day {
  width: 196px;
}
th,
td {
  padding: 0;
  border-right: 1px solid #000;
  border-bottom: 1px solid #000;
}
thead th {
  height: 20px;
  border-color: #9b9b9b;
  background: #e6e6e6;
  font-weight: 400;
  line-height: 18px;
  color: #222;
  border-image: linear-gradient(#d8d8d8, #9b9b9b) 1;
}
thead .corner {
  text-align: right;
}
.corner svg {
  display: block;
  margin: 4px 3px 0 auto;
}
thead .sel-col {
  border-right: 0;
  border-bottom: 2px solid #217346;
  border-image: none;
  background: #d2d2d2;
}
.row-no {
  background: #e6e6e6;
  border-right-color: #9b9b9b;
  border-bottom-color: #c6c6c6;
  font-weight: 400;
  vertical-align: bottom;
  line-height: 18px;
  color: #222;
}
td {
  background: #fff;
  text-align: center;
}
.shade td {
  background: #d9e1f2;
}
td.blank {
  background: #fff;
  border-bottom-color: #d4d4d4;
}
td.label {
  font-weight: 700;
}
.text {
  padding: 0 2px;
  white-space: pre;
}
.text svg {
  vertical-align: -3px;
}
.date td {
  height: 20px;
  line-height: 19px;
}
.charge td {
  height: 40px;
}
.charge:not(.shade) td:nth-child(n + 4) {
  border-right-color: #d4d4d4;
}
.current td:nth-child(n + 4) {
  border-right-color: #d9e1f2;
}
.current .row-no {
  background: #d2d2d2;
  color: #217346;
  border-right: 2px solid #217346;
}
.task td {
  height: 180px;
}
.last td {
  height: 160px;
}
.last td:nth-child(n + 4) {
  text-align: left;
}
td.cut {
  position: relative;
  border-right: 0;
  text-align: left;
}
.selection {
  position: absolute;
  left: -2px;
  top: -2px;
  right: -4px;
  bottom: -2px;
  border: 2px solid #217346;
  box-shadow: inset 0 0 0 1px #fff;
}
.vscroll {
  display: flex;
  flex-direction: column;
  width: 21px;
  padding: 2px 3px 0;
}
.vscroll button,
.hscroll button {
  flex: none;
  width: 15px;
  height: 15px;
  border: 1px solid #ababab;
  background: #fff;
  color: #555;
}
.vtrack {
  display: flex;
  flex: 1;
  flex-direction: column;
  width: 15px;
  background: #dadada;
}
.vtrack::before {
  content: '';
  flex: 154;
}
.vtrack::after {
  content: '';
  flex: 67;
}
.vthumb {
  flex: 220;
  border: 1px solid #ababab;
  background: #fff;
}

/* sheet tabs */
.sheet-tabs {
  display: flex;
  flex: none;
  height: 28px;
  border-top: 1px solid #9b9b9b;
}
.nav-arrows {
  display: flex;
  align-items: center;
  gap: 23px;
  width: 100px;
  padding-left: 27px;
  color: #bbb;
}
.sheet-tab {
  width: 65px;
  height: 25px;
  margin-top: -1px;
  border: 1px solid #9b9b9b;
  border-top-color: #fff;
  border-bottom: 2px solid #217346;
  background: #fff;
  color: #217346;
  font-weight: 700;
}
.add {
  width: 17px;
  margin-left: 33px;
}
.hgrip {
  margin: 8px 15px 0 auto;
}
.hscroll {
  display: flex;
  width: 509px;
  margin: 6px 21px 0 0;
  height: 15px;
}
.htrack {
  display: flex;
  flex: 1;
  background: #dadada;
}
.hthumb {
  width: 329px;
  border: 1px solid #ababab;
  background: #fff;
}

/* status */
.status {
  display: flex;
  align-items: center;
  flex: none;
  height: 22px;
  border-top: 1px solid #c6c6c6;
  background: #f3f2f1;
  font-size: 11px;
}
.ready {
  flex: 1;
  padding-left: 7px;
}
.view {
  width: 40px;
  height: 21px;
}
.status .on {
  background: #cfcdcb;
  outline: 0;
}
.zoom-btn {
  width: 19px;
  height: 20px;
}
.zoom {
  width: 100px;
  height: 20px;
  margin: 0;
  background: linear-gradient(#a6a6a6, #a6a6a6) center / 100% 1px no-repeat;
}
.zoom::-webkit-slider-thumb {
  appearance: none;
  width: 5px;
  height: 11px;
  background: #666;
}
.percent {
  width: 42px;
  padding-right: 7px;
  text-align: right;
}

/* taskbar */
.taskbar {
  display: flex;
  align-items: center;
  flex: none;
  height: 40px;
  background: linear-gradient(90deg, #d4e4ee, #d6e4ea 50%, #dcdfe2 70%, #d2e2ea 80%, #d0e1ea);
  color: #111;
}
.start {
  width: 48px;
  height: 40px;
}
.task-search {
  display: flex;
  align-items: center;
  gap: 12px;
  width: 288px;
  height: 40px;
  padding-left: 12px;
  border: 1px solid #c4c8cc;
  background: #fff;
  font-size: 14px;
}
.task-search input {
  flex: 1;
}
.task-search input::placeholder {
  color: #444;
}
.bars {
  width: 4px;
  height: 16px;
  margin: 0 13px 0 6px;
  border: solid #222;
  border-width: 0 1px;
}
.apps {
  display: flex;
  flex: none;
  width: 628px;
  height: 40px;
}
.apps button {
  flex: 1;
  position: relative;
}
.apps .open::after {
  content: '';
  position: absolute;
  left: 5px;
  right: 4px;
  bottom: 0;
  height: 2px;
  background: #12b0bd;
}
.apps .focus {
  background: #edf3f6;
}
.apps .focus::after {
  left: 0;
  right: 0;
}
.help {
  width: 46px;
}
.weather {
  gap: 7px;
  margin-left: 14px;
  font-size: 14px;
}
.tray {
  display: flex;
  margin-left: auto;
}
.tray button {
  width: 24px;
}
.clock {
  display: flex;
  flex-direction: column;
  align-items: center;
  width: 62px;
  line-height: 18px;
}
.notif {
  width: 36px;
  margin-right: 12px;
  padding-left: 2px;
}
.desk-edge {
  width: 5px;
  height: 40px;
  border-left: 1px solid #9fb0ba;
}
</style>
